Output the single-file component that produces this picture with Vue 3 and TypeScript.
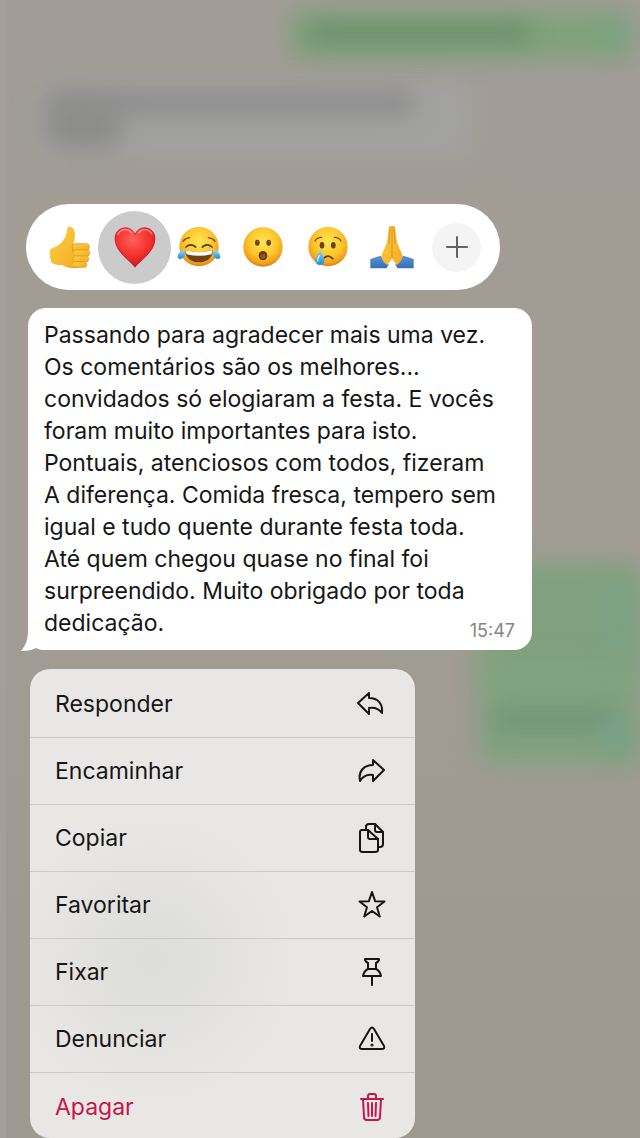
<script setup lang="ts">
import { ref } from 'vue'

interface MenuItem {
  id: string
  label: string
  danger?: boolean
}

const reactions = [
  { id: 'thumb', label: 'Curtir' },
  { id: 'heart', label: 'Amei' },
  { id: 'joy', label: 'Haha' },
  { id: 'wow', label: 'Uau' },
  { id: 'cry', label: 'Triste' },
  { id: 'pray', label: 'Obrigado' },
]
const selected = ref('heart')

const lines: string[] = [
  'Passando para agradecer mais uma vez.',
  'Os comentários são os melhores...',
  'convidados só elogiaram a festa. E vocês',
  'foram muito importantes para isto.',
  'Pontuais, atenciosos com todos, fizeram',
  'A diferença. Comida fresca, tempero sem',
  'igual e tudo quente durante festa toda.',
  'Até quem chegou quase no final foi',
  'surpreendido. Muito obrigado por toda',
  'dedicação.',
]

const menu: MenuItem[] = [
  { id: 'reply', label: 'Responder' },
  { id: 'forward', label: 'Encaminhar' },
  { id: 'copy', label: 'Copiar' },
  { id: 'star', label: 'Favoritar' },
  { id: 'pin', label: 'Fixar' },
  { id: 'report', label: 'Denunciar' },
  { id: 'delete', label: 'Apagar', danger: true },
]
</script>

<template>
  <main class="screen">
    <div class="backdrop" aria-hidden="true">
      <div class="blob sent-top"></div>
      <div class="blob sent-top-text"></div>
      <div class="blob sent-top-tick"></div>
      <div class="blob received"></div>
      <div class="blob received-text"></div>
      <div class="blob received-text-short"></div>
      <div class="blob sent-mid"></div>
      <div class="blob sent-low"></div>
      <div class="blob sent-low-text"></div>
      <div class="blob tick-mid"></div>
      <div class="blob tick-low"></div>
    </div>

    <svg class="defs" width="0" height="0" aria-hidden="true">
      <defs>
        <radialGradient id="face" cx="50%" cy="38%" r="62%">
          <stop offset="0" stop-color="#ffe552" />
          <stop offset="0.55" stop-color="#fdc92f" />
          <stop offset="0.85" stop-color="#f4a31c" />
          <stop offset="1" stop-color="#d98012" />
        </radialGradient>
        <linearGradient id="hand" x1="0" y1="0" x2="1" y2="1">
          <stop offset="0" stop-color="#ffd044" />
          <stop offset="1" stop-color="#f3aa20" />
        </linearGradient>
        <linearGradient id="sleeve" x1="0" y1="0" x2="0" y2="1">
          <stop offset="0" stop-color="#5b93d8" />
          <stop offset="1" stop-color="#336fb8" />
        </linearGradient>
        <radialGradient id="heart" cx="45%" cy="30%" r="75%">
          <stop offset="0" stop-color="#ff6259" />
          <stop offset="0.55" stop-color="#f5302f" />
          <stop offset="1" stop-color="#c3101f" />
        </radialGradient>
        <linearGradient id="tear" x1="0" y1="0" x2="0" y2="1">
          <stop offset="0" stop-color="#9adcf8" />
          <stop offset="1" stop-color="#168fd8" />
        </linearGradient>
      </defs>
    </svg>

    <section class="reactions" aria-label="Reações">
      <button
        v-for="r in reactions"
        :key="r.id"
        type="button"
        class="reaction"
        :class="{ selected: selected === r.id }"
        :aria-label="r.label"
        :aria-pressed="selected === r.id"
        @click="selected = r.id"
      >
        <svg class="emoji" viewBox="0 0 132 132" aria-hidden="true">
          <g v-if="r.id === 'thumb'" stroke-linejoin="round">
            <path d="M7 72 C20 68 31 62 42 51 C52 39 56 27 57 14 C58 5 63 3 68 5 C78 8 82 21 81 32 C81 42 77 49 76 56 H103 V123 C78 134 58 130 43 120 C31 121 20 119 11 113 C5 100 4 84 7 72Z" fill="url(#hand)" />
            <path d="M76 56 C72 64 72 72 76 80" fill="none" stroke="#d99319" stroke-width="3" />
            <g fill="url(#hand)" stroke="#dc941b" stroke-width="2">
              <rect x="73" y="56" width="51" height="20" rx="9" />
              <rect x="75" y="75" width="50" height="19" rx="9" />
              <rect x="74" y="93" width="48" height="18" rx="9" />
              <rect x="72" y="110" width="44" height="17" rx="8" />
            </g>
          </g>
          <g v-else-if="r.id === 'heart'">
            <path d="M66 127 C58 112 6 82 6 41 C6 5 52 -4 66 28 C80 -4 126 5 126 41 C126 82 74 112 66 127Z" fill="url(#heart)" stroke="#b90f1c" stroke-width="2" />
            <path d="M15 28 C22 12 43 8 56 23 M77 23 C89 9 110 12 116 27" fill="none" stroke="#ff9b90" stroke-width="5" stroke-linecap="round" opacity="0.7" />
          </g>
          <g v-else-if="r.id === 'joy'">
            <circle cx="66" cy="65" r="59" fill="url(#face)" />
            <path d="M18 49 Q25 39 38 38 M94 38 Q107 39 114 49" fill="none" stroke="#7a4a10" stroke-width="4" stroke-linecap="round" />
            <path d="M27 66 Q41 53 56 66 M76 66 Q91 53 105 66" fill="none" stroke="#63370d" stroke-width="5" stroke-linecap="round" />
            <path d="M24 76 Q66 87 108 76 C106 99 90 112 66 112 C42 112 26 99 24 76Z" fill="#70430f" />
            <path d="M25 76 Q66 87 107 76 Q106 82 103 88 Q66 97 29 88 Q26 82 25 76Z" fill="#fff" />
            <path d="M21 74 C13 75 1 86 2 96 C4 106 18 103 22 93 C24 86 24 79 21 74Z M111 74 C119 75 131 86 130 96 C128 106 114 103 110 93 C108 86 108 79 111 74Z" fill="url(#tear)" />
          </g>
          <g v-else-if="r.id === 'wow'">
            <circle cx="66" cy="66" r="59" fill="url(#face)" />
            <ellipse cx="49" cy="53" rx="7" ry="9" fill="#68420d" />
            <ellipse cx="83" cy="53" rx="7" ry="9" fill="#68420d" />
            <circle cx="50" cy="50" r="2" fill="#b98b42" />
            <circle cx="84" cy="50" r="2" fill="#b98b42" />
            <ellipse cx="66" cy="92" rx="13" ry="14" fill="#6a3b0d" />
            <ellipse cx="66" cy="94" rx="7" ry="7" fill="#93591c" />
          </g>
          <g v-else-if="r.id === 'cry'">
            <circle cx="66" cy="65" r="59" fill="url(#face)" />
            <path d="M27 48 Q33 37 47 37 M85 37 Q99 37 105 48" fill="none" stroke="#7a4a10" stroke-width="4" stroke-linecap="round" />
            <ellipse cx="48" cy="61" rx="7" ry="10" fill="#68420d" />
            <ellipse cx="82" cy="61" rx="7" ry="10" fill="#68420d" />
            <path d="M54 99 Q67 87 80 101" fill="none" stroke="#63370d" stroke-width="5" stroke-linecap="round" />
            <path d="M43 72 C38 88 28 96 28 107 C28 124 55 124 55 107 C55 96 46 88 43 72Z" fill="url(#tear)" />
            <path d="M40 92 Q34 101 35 108" fill="none" stroke="#d8f4ff" stroke-width="4" stroke-linecap="round" />
          </g>
          <g v-else>
            <path d="M1 102 L32 92 L56 118 L50 130 H1Z M131 102 L100 92 L76 118 L82 130 H131Z" fill="url(#sleeve)" />
            <path d="M65 3 C59 0 56 4 56 12 L51 50 C48 65 37 79 34 94 C36 106 43 115 52 120 C57 111 63 107 66 98 C69 107 75 111 80 120 C89 115 96 106 98 94 C95 79 84 65 81 50 L76 12 C76 4 73 0 67 3Z" fill="url(#hand)" />
            <path d="M66 4 V100 M60 8 L57 55 M72 8 L75 55" fill="none" stroke="#b97c17" stroke-width="2" stroke-linecap="round" />
          </g>
        </svg>
      </button>
      <button type="button" class="reaction" aria-label="Mais reações">
        <span class="more">
          <svg viewBox="0 0 24 24" width="24" height="24" aria-hidden="true">
            <path d="M12 2 V22 M2 12 H22" stroke="#636363" stroke-width="2" stroke-linecap="round" />
          </svg>
        </span>
      </button>
    </section>

    <article class="bubble">
      <svg class="tail" viewBox="0 0 28 26" aria-hidden="true">
        <path d="M7 0 V4 C7 14 5 19 0 25 C7 25 12 24 15 22 C18 24 22 24 28 24 V0Z" fill="#fff" />
      </svg>
      <p class="message">
        <span v-for="line in lines" :key="line" class="line">{{ line }}</span>
      </p>
      <time class="time" datetime="15:47">15:47</time>
    </article>

    <nav class="menu" aria-label="Ações da mensagem">
      <button
        v-for="item in menu"
        :key="item.id"
        type="button"
        class="item"
        :class="{ danger: item.danger }"
      >
        <span>{{ item.label }}</span>
        <svg class="icon" viewBox="0 0 32 32" aria-hidden="true">
          <path v-if="item.id === 'reply'" d="M13 5 L2 15 L13 26 V20 C19 19 23 21 26 25 C27 16 22 10 13 10Z" />
          <path v-else-if="item.id === 'forward'" d="M17 5 L28 15 L17 26 V20 C11 19 7 21 4 26 C2 16 8 10 17 10Z" />
          <g v-else-if="item.id === 'copy'">
            <path d="M10 7 V5 Q10 2 13 2 H19 L27 10 V22 Q27 25 24 25 H22" />
            <path d="M19 2 V8 Q19 10 21 10 H27" />
            <path d="M6 8 H12 L22 17 V28 Q22 30 19 30 H7 Q4 30 4 28 V10 Q4 8 6 8Z" />
            <path d="M12 8 V15 Q12 17 14 17 H22" />
          </g>
          <path v-else-if="item.id === 'star'" d="M16 3 L19.200 12.300 L28.500 12.500 L21 18.300 L23.800 27.500 L16 22 L8.200 27.500 L11 18.300 L3.500 12.500 L12.800 12.300Z" />
          <g v-else-if="item.id === 'pin'">
            <path d="M9 3 H23 V4 Q22 6 20 7 V13 Q24 15 25 20 H7 Q8 15 12 13 V7 Q10 6 9 4Z M12 13 H20 M16 20 V29" />
          </g>
          <g v-else-if="item.id === 'report'">
            <path d="M14 6 Q16 3 18 6 L28 23 Q29 26 26 26 H6 Q3 26 4 23Z M16 11 V18" />
            <circle cx="16" cy="22" r="0.600" />
          </g>
          <g v-else>
            <path d="M5 8 H27 M12 8 V5 Q12 3 14 3 H18 Q20 3 20 5 V8 M7 8 L8 26 Q8 29 11 29 H21 Q24 29 24 26 L25 8 M12 12 L12.500 25 M16 12 V25 M20 12 L19.500 25" />
          </g>
        </svg>
      </button>
    </nav>
  </main>
</template>

<style>
html,
body {
  margin: 0;
  background: #a19d95;
}
</style>

<style scoped>
.screen {
  position: relative;
  display: flex;
  flex-direction: column;
  align-items: flex-start;
  box-sizing: border-box;
  min-height: 100vh;
  padding: 204px 26px 0;
  overflow: hidden;
  background: linear-gradient(180deg, #a19d96, #a19d94 50%, #9e9990);
  font-family: Inter, "Liberation Sans", sans-serif;
  color: #161616;
}

.defs {
  position: absolute;
}

.backdrop {
  position: absolute;
  inset: 0;
  overflow: hidden;
  border-left: 6px solid #a4a099;
}

.blob {
  position: absolute;
  border-radius: 12px;
  filter: blur(11px);
}

.sent-top {
  top: 11px;
  right: 8px;
  width: 342px;
  height: 48px;
  background: #80a27c;
}

.sent-top-text {
  top: 22px;
  right: 108px;
  width: 226px;
  height: 22px;
  background: #6f906c;
}

.sent-top-tick {
  top: 24px;
  right: 14px;
  width: 16px;
  height: 24px;
  background: #7ba48e;
}

.received {
  top: 82px;
  left: 30px;
  width: 436px;
  height: 74px;
  background: #a2a2a1;
}

.received-text {
  top: 90px;
  left: 40px;
  width: 370px;
  height: 26px;
  background: #8f8e8e;
}

.received-text-short {
  top: 104px;
  left: 40px;
  width: 76px;
  height: 44px;
  background: #8c8c8b;
}

.sent-mid {
  top: 562px;
  right: 0;
  width: 160px;
  height: 130px;
  background: #81a17e;
}

.sent-low {
  top: 660px;
  right: 0;
  width: 160px;
  height: 106px;
  background: #82a37f;
}

.sent-low-text {
  top: 706px;
  right: 20px;
  width: 130px;
  height: 28px;
  background: #76977a;
}

.tick-mid {
  top: 580px;
  right: 8px;
  width: 26px;
  height: 74px;
  background: #7aa287;
}

.tick-low {
  top: 716px;
  right: 10px;
  width: 26px;
  height: 40px;
  background: #78a18a;
}

.reactions {
  position: relative;
  display: grid;
  grid-template-columns: repeat(7, 1fr);
  align-items: center;
  box-sizing: border-box;
  width: 100%;
  max-width: 474px;
  height: 86px;
  padding: 0 11px 0 12px;
  border-radius: 43px;
  background: #fff;
}

.reaction {
  display: flex;
  align-items: center;
  justify-content: center;
  justify-self: center;
  flex-shrink: 0;
  width: 73px;
  height: 73px;
  margin: 0 -5px;
  padding: 0;
  border: 0;
  border-radius: 50%;
  background: transparent;
  cursor: pointer;
}

.selected {
  background: #cbcbcb;
}

.emoji {
  width: 44px;
  height: 44px;
  overflow: visible;
}

.more {
  display: flex;
  align-items: center;
  justify-content: center;
  width: 49px;
  height: 49px;
  border-radius: 50%;
  background: #f4f4f4;
}

.bubble {
  position: relative;
  box-sizing: border-box;
  width: 100%;
  max-width: 504px;
  margin: 18px 0 0 2px;
  padding: 11px 16px;
  border-radius: 18px;
  background: #fff;
}

.tail {
  position: absolute;
  left: -7px;
  bottom: -2px;
  width: 28px;
  height: 26px;
}

.message {
  position: relative;
  margin: 0;
  font-size: 23px;
  line-height: 32px;
}

.line {
  display: block;
}

.time {
  position: absolute;
  right: 17px;
  bottom: 9px;
  font-size: 18px;
  line-height: 20px;
  color: #858585;
}

.menu {
  position: relative;
  box-sizing: border-box;
  width: 100%;
  max-width: 385px;
  margin: 19px 0 0 4px;
  padding-top: 2px;
  overflow: hidden;
  border-radius: 20px;
  background: radial-gradient(circle at 32% 62%, #dcdcd8, #e8e7e5 36%);
}

.item {
  display: flex;
  align-items: center;
  justify-content: space-between;
  box-sizing: border-box;
  width: 100%;
  height: 67px;
  padding: 0 27px 0 25px;
  border: 0;
  border-bottom: 1px solid #cbcac8;
  background: transparent;
  color: #161616;
  font-family: inherit;
  font-size: 23px;
  line-height: 32px;
  text-align: left;
  cursor: pointer;
}

.item:last-child {
  height: 65px;
  padding-top: 2px;
  border-bottom: 0;
}

.item.danger {
  color: #c5164c;
}

.icon {
  width: 32px;
  height: 32px;
  fill: none;
  stroke: currentColor;
  stroke-width: 2;
  stroke-linecap: round;
  stroke-linejoin: round;
}
</style>
